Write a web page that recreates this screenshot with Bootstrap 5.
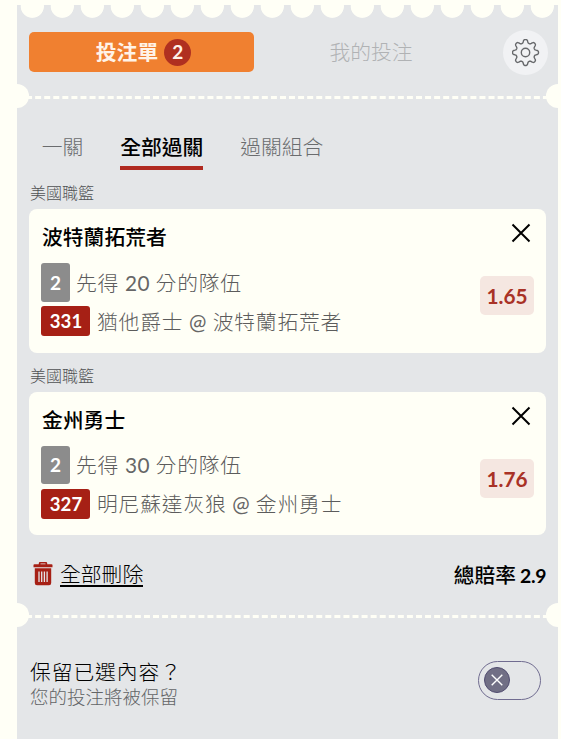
<!DOCTYPE html>
<html lang="zh-Hant">

<head>
    <meta charset="UTF-8">
    <meta name="viewport" content="width=device-width, initial-scale=1.0">
    <link href="https://cdn.jsdelivr.net/npm/bootstrap@5.3.3/dist/css/bootstrap.min.css" rel="stylesheet">
    <script src="https://cdn.jsdelivr.net/npm/bootstrap@5.3.3/dist/js/bootstrap.bundle.min.js"></script>
    <title>投注單</title>
    <style>
        body {
            background-color: #fffff6;
            color: #000;
            font-family: Lato, "Noto Sans CJK TC", sans-serif;
            font-size: 20.8px;
            font-weight: 300;
            line-height: 30px;
            overflow: hidden;
        }

        .slip {
            width: 541px;
            height: 734px;
            margin: 5px 0 0 17px;
            background: radial-gradient(circle at 15.3px 1.2px, #fffff6 11.2px, transparent 12px) 0 0 / 30px 16px repeat-x #e4e6e8;
        }

        .slip-head {
            height: 91px;
            padding: 25px 10px 0 12px;
        }

        .slip-tabs {
            padding-top: 2px;
        }

        .slip-tabs .nav-link {
            width: 225px;
            height: 40px;
            padding: 0 0 0 1px;
            color: #b0b2b4;
            border-radius: 5px;
        }

        .slip-tabs .nav-link.active {
            padding-left: 4px;
            background-color: #f08030;
            color: #fff3e8;
            font-weight: 700;
        }

        .count {
            width: 27px;
            height: 27px;
            margin-left: 6px;
            background-color: #b03020;
            color: #fff3e8;
            font-size: 19px;
            font-weight: 700;
        }

        .gear {
            width: 45px;
            height: 45px;
            background-color: #f1f2f4;
        }

        .tear {
            height: 3px;
            border-top: 3px dashed #fffff6;
        }

        /* punched holes at both ends of the tear line */
        .tear::before,
        .tear::after {
            content: "";
            position: absolute;
            top: -15px;
            left: -12px;
            width: 24px;
            height: 24px;
            border-radius: 50%;
            background-color: #fffff6;
        }

        .tear::after {
            left: auto;
            right: -12px;
        }

        .slip-bets {
            height: 516px;
            padding: 33px 12px 0;
        }

        .kinds {
            height: 38px;
            padding-left: 12.8px;
            gap: 36.8px;
        }

        .kinds .nav-link {
            padding: 0;
            color: #6a6c6e;
        }

        .kinds .nav-link.active {
            color: #000;
            font-weight: 500;
            border-bottom: 4px solid #b02a20;
        }

        .league {
            height: 39px;
            padding: 8px 0 0 1px;
            font-size: 16px;
            color: #505254;
        }

        .bet {
            height: 144px;
            padding: 12px 12px 0;
            background-color: #fffff6;
            border: 0;
            border-radius: 8px;
        }

        .bet:last-child {
            height: 143px;
        }

        .bet-name {
            height: 42px;
            font-weight: 500;
            padding: 1px 0 0 1px;
        }

        .bet-close {
            padding: 2px 3px 0 0;
        }

        .bet-line {
            height: 39px;
            gap: 6px;
            color: #5c5c5c;
            letter-spacing: 0.8px;
        }

        .bet-game {
            gap: 7px;
        }

        .bet:last-child .tag-n {
            height: 38px;
        }

        .bet:last-child .bet-line {
            height: 38.5px;
        }

        .bet:last-child .tag-id {
            margin-top: 0;
        }

        .latin {
            font-weight: 400;
            letter-spacing: 0.4px;
            color: #666;
        }

        .tag {
            height: 39px;
            width: 29px;
            border-radius: 3px;
            background-color: #8c8c8c;
            color: #fff;
            font-weight: 700;
            font-size: 19px;
            letter-spacing: 0;
        }

        .bet .tag-id {
            width: 49px;
            height: 30px;
            padding-left: 1px;
            background-color: #a62015;
            font-size: 18.6px;
        }

        .bet:not(:last-child) .tag-id {
            margin-top: -1px;
        }

        .odds {
            width: 54px;
            height: 39px;
            margin-top: 33px;
            border-radius: 5px;
            background-color: #f5e7e1;
            color: #a93226;
            font-weight: 700;
        }

        .slip-total {
            padding: 25px 0 0 5px;
        }

        .clear-all {
            margin-top: 2px;
            color: #000;
            border-bottom: 2px solid #000;
            line-height: 23px;
        }

        .total {
            font-size: 20.7px;
            font-weight: 500;
            word-spacing: -1px;
        }

        .total-num {
            font-size: 19.4px;
            font-weight: 700;
            letter-spacing: -0.4px;
        }

        .slip-keep {
            padding: 39px 17px 0 13px;
        }

        .keep-title {
            letter-spacing: 0.9px;
        }

        .keep-note {
            font-size: 18.5px;
            line-height: 20px;
            color: #626466;
        }

        .toggle {
            width: 63px;
            height: 39px;
            margin-top: 4px;
            padding: 0 0 1px 5px;
            border: 1px solid #706c90;
        }

        .knob {
            width: 26px;
            height: 26px;
            border: 1px solid #514c70;
            background-color: #716f85;
        }
    </style>
</head>

<body>
    <div class="slip">
        <div class="slip-head d-flex justify-content-between">
            <nav class="slip-tabs nav nav-pills gap-1 flex-nowrap">
                <a href="#" class="nav-link active d-flex align-items-center justify-content-center">投注單<span
                        class="count rounded-circle d-flex align-items-center justify-content-center">2</span></a>
                <a href="#" class="nav-link d-flex align-items-center justify-content-center">我的投注</a>
            </nav>
            <a href="#" class="gear rounded-circle d-flex align-items-center justify-content-center">
                <svg width="28" height="28" viewBox="0 0 28 28" fill="none" stroke="#66686b" stroke-width="1.4" stroke-linejoin="round">
                    <path id="gear-path" />
                    <circle cx="13.5" cy="13.5" r="4.2" />
                </svg>
            </a>
        </div>

        <div class="tear position-relative"></div>

        <div class="slip-bets">
            <nav class="kinds nav flex-nowrap">
                <a href="#" class="nav-link">一關</a>
                <a href="#" class="nav-link active">全部過關</a>
                <a href="#" class="nav-link">過關組合</a>
            </nav>

            <div id="bets"></div>

            <div class="slip-total d-flex justify-content-between">
                <div class="d-flex align-items-start">
                    <svg class="me-2 overflow-visible" width="18" height="26" viewBox="0 -3 18 26" fill="#a62015">
                        <path fill-rule="evenodd" d="M4.8 1.2V.2Q4.8 -1 6 -1H12Q13.2 -1 13.2 .2V1.2H17.5Q18.5 1.2 18.5 2V4.2H-.5V2Q-.5 1.2.5 1.2ZM6.5 1.2H11.5V.4H6.5Z" />
                        <path d="M.8 5.3H17.2V20Q17.2 22.2 15 22.2H3Q.8 22.2 .8 20Z" />
                        <path d="M5 8.5V19M7.7 8.5V19M10.4 8.5V19M13.1 8.5V19" stroke="#e4e6e8" stroke-width="1.3" />
                    </svg>
                    <a href="#" class="clear-all text-decoration-none">全部刪除</a>
                </div>
                <div class="total">總賠率 <span class="total-num">2.9</span></div>
            </div>
        </div>

        <div class="tear position-relative"></div>

        <div class="slip-keep d-flex justify-content-between">
            <div>
                <div class="keep-title">保留已選內容？</div>
                <div class="keep-note">您的投注將被保留</div>
            </div>
            <div class="toggle rounded-pill d-flex align-items-center" role="switch">
                <span class="knob rounded-circle d-flex align-items-center justify-content-center">
                    <svg width="12" height="12" viewBox="0 0 12 12" stroke="#fff" stroke-width="1.4">
                        <path d="M.7 .7L11.3 11.3M11.3 .7L.7 11.3" />
                    </svg>
                </span>
            </div>
        </div>
    </div>

    <script>
        var bets = [
            { league: '美國職籃', name: '波特蘭拓荒者', n: 2, points: 20, id: 331, away: '猶他爵士', home: '波特蘭拓荒者', odds: '1.65' },
            { league: '美國職籃', name: '金州勇士', n: 2, points: 30, id: 327, away: '明尼蘇達灰狼', home: '金州勇士', odds: '1.76' },
        ];

        function showBets() {
            var html = '';
            bets.forEach(function (b) {
                html += `
                    <div class="league">${b.league}</div>
                    <div class="bet card flex-row justify-content-between">
                        <div>
                            <div class="bet-name">${b.name}</div>
                            <div class="bet-line d-flex align-items-center">
                                <span class="tag tag-n d-flex align-items-center justify-content-center">${b.n}</span>
                                <span>先得<span class="latin"> ${b.points} </span>分的隊伍</span>
                            </div>
                            <div class="bet-line bet-game d-flex align-items-center">
                                <span class="tag tag-id d-flex align-items-center justify-content-center">${b.id}</span>
                                <span>${b.away}<span class="latin"> @ </span>${b.home}</span>
                            </div>
                        </div>
                        <div class="d-flex flex-column align-items-end">
                            <a href="#" class="bet-close d-flex">
                                <svg width="20" height="20" viewBox="0 0 20 20" stroke="#000" stroke-width="2">
                                    <path d="M1.5 1.5L18.5 18.5M18.5 1.5L1.5 18.5" />
                                </svg>
                            </a>
                            <span class="odds d-flex align-items-center justify-content-center">${b.odds}</span>
                        </div>
                    </div>`;
            });
            document.getElementById('bets').innerHTML = html;
        }

        // outline of the settings cog, eight rounded teeth
        function cog() {
            var d = '';
            for (var i = 0; i <= 144; i++) {
                var t = i / 144 * Math.PI * 2;
                var w = Math.cos(8 * t);
                var r = 11.3 + 1.7 * Math.tanh(1.6 * w) / Math.tanh(1.6);
                d += (i ? 'L' : 'M') + (13.5 + r * Math.sin(t)).toFixed(2) + ' ' + (13.5 - r * Math.cos(t)).toFixed(2);
            }
            document.getElementById('gear-path').setAttribute('d', d + 'Z');
        }

        showBets();
        cog();
    </script>
</body>

</html>
